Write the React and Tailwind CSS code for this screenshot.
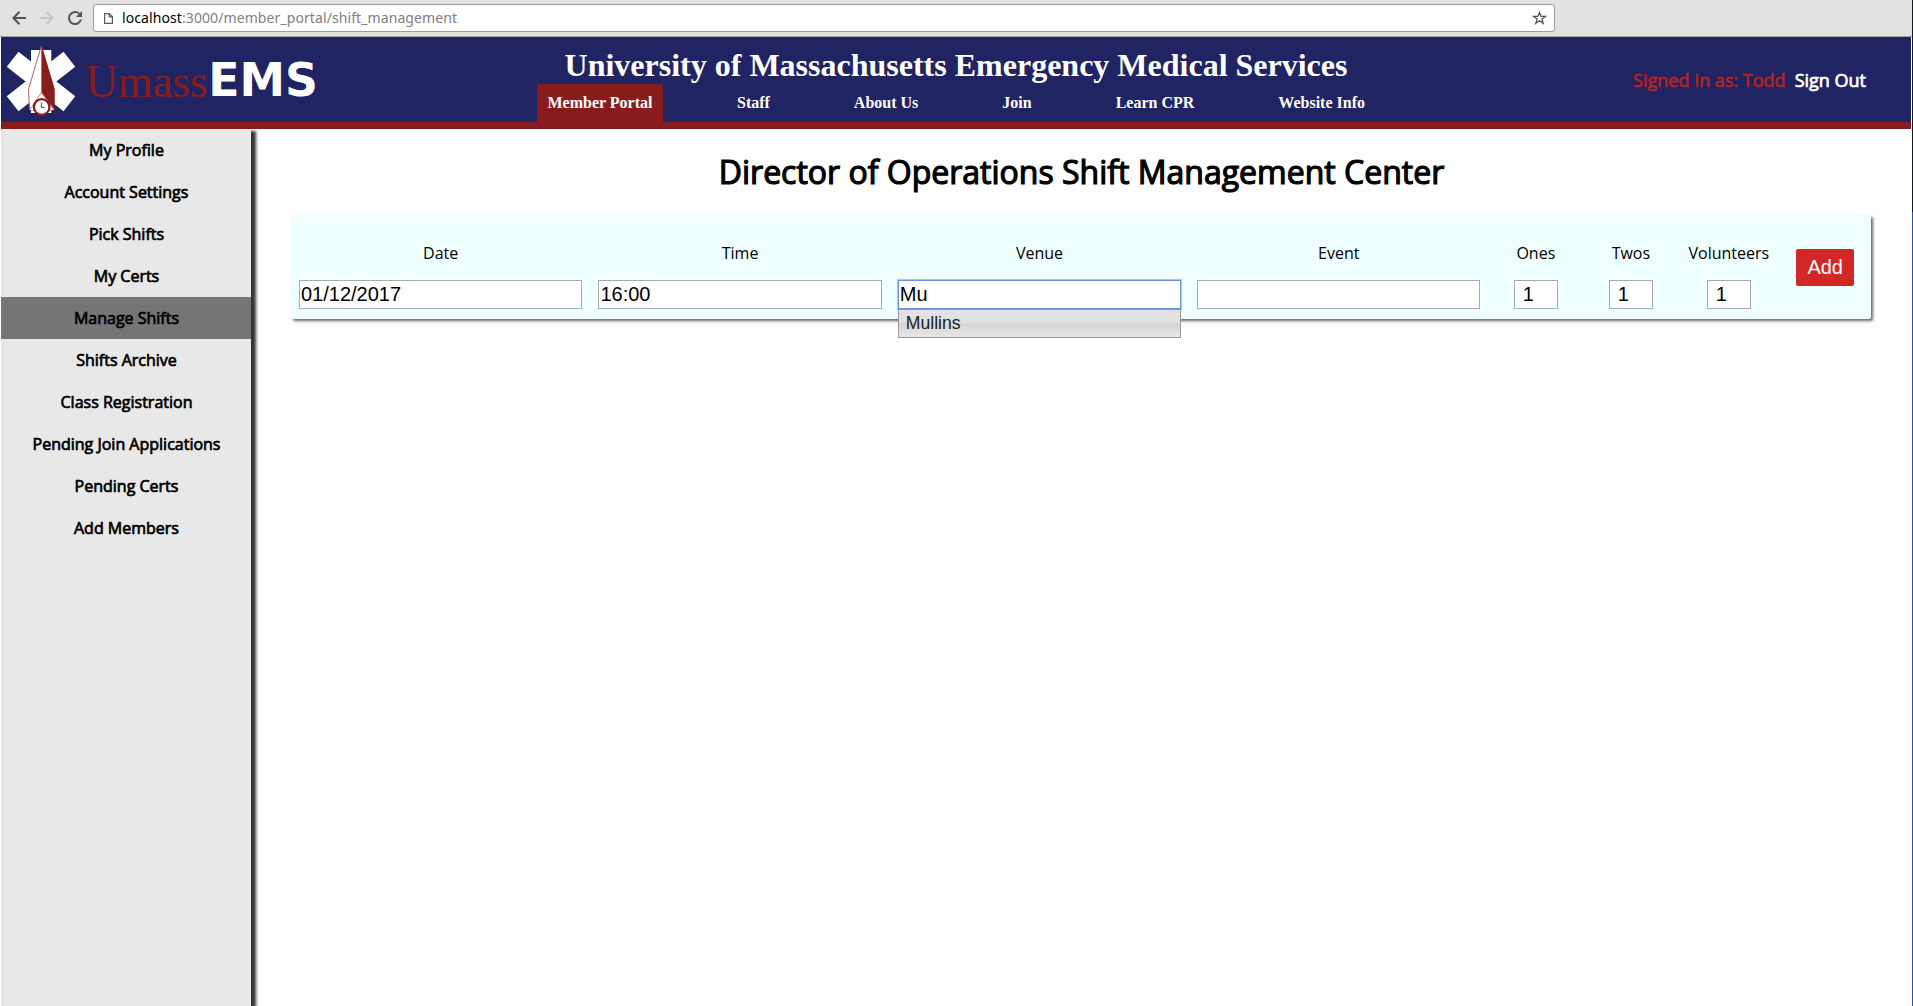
const navItems = ['Member Portal', 'Staff', 'About Us', 'Join', 'Learn CPR', 'Website Info'];

const sideItems = [
  'My Profile', 'Account Settings', 'Pick Shifts', 'My Certs', 'Manage Shifts',
  'Shifts Archive', 'Class Registration', 'Pending Join Applications', 'Pending Certs', 'Add Members',
];

function BrowserBar() {
  return (
    <div className="flex h-[37px] shrink-0 items-start border-b border-[#a3a3a3] bg-[#e2e2e2] pt-1 font-['Noto_Sans',sans-serif]">
      <svg className="ml-3 mt-[7px] shrink-0" width="14" height="14" viewBox="0 0 14 14" fill="none" stroke="#545454" strokeWidth="2">
        <path d="M14 7H1.5M7.5 0.8L1.4 7l6.1 6.2" />
      </svg>
      <svg className="ml-[14px] mt-[7px] shrink-0" width="14" height="14" viewBox="0 0 14 14" fill="none" stroke="#c6c6c6" strokeWidth="2">
        <path d="M0 7h12.5M6.5 0.8L12.6 7l-6.1 6.2" />
      </svg>
      <svg className="ml-[14px] mt-[7px] shrink-0" width="14" height="14" viewBox="0 0 14 14" fill="none" stroke="#545454" strokeWidth="2">
        <path d="M12.9 8.6A6 6 0 1 1 11.3 2.8" />
        <path d="M14 0v6H8z" fill="#545454" stroke="none" />
      </svg>
      <div className="ml-[11px] flex h-7 w-[1462px] items-center rounded-[3px] border border-[#9c9c9c] bg-white pl-[10px] pr-[7px]">
        <svg width="9" height="11" viewBox="0 0 9 11" fill="none" stroke="#5a5a5a" strokeWidth="1.2">
          <path d="M0.6 0.6h4.8l3 3v6.8H0.6zM5.2 0.6v3.2h3.2" />
        </svg>
        <span className="ml-[9px] text-[14px] leading-5 tracking-[0.09px] text-[#808080]">
          <span className="text-black">localhost</span>:3000/member_portal/shift_management
        </span>
        <svg className="ml-auto" width="15" height="14" viewBox="0 0 15 14" fill="none" stroke="#545454" strokeWidth="1.3">
          <path d="M7.5 1.4l1.6 4h4.2L9.900 8l1.3 4.400-3.700-2.600-3.700 2.600L5.100 8 1.700 5.400h4.200z" />
        </svg>
      </div>
    </div>
  );
}

function Logo() {
  return (
    <svg width="330" height="85" viewBox="0 0 330 85" className="block">
      <g fill="#fff" transform="translate(40 44.500)">
        <rect x="-10" y="-31.500" width="20.300" height="63" />
        <rect x="-9.500" y="-36" width="19" height="72" transform="rotate(52)" />
        <rect x="-9.500" y="-36" width="19" height="72" transform="rotate(-52)" />
      </g>
      <path d="M40.400 8.500L27.500 52.500L28.500 73H53V52z" fill="#fff" stroke="#9c3a3a" strokeWidth="0.8" />
      <path d="M40.400 8L53.600 52V73L40.400 55.500z" fill="#881c1c" />
      <path d="M28.500 73L40.400 55.500L53 73" fill="#fff" stroke="#b86a6a" strokeWidth="0.8" />
      <circle cx="40.700" cy="70" r="7.800" fill="#fff" stroke="#881c1c" strokeWidth="2.300" />
      <path d="M40.300 65.500v5h3.200" fill="none" stroke="#881c1c" strokeWidth="0.9" />
      <text x="84.500" y="59.700" fontFamily="'Liberation Serif', serif" fontSize="46" textLength="122" lengthAdjust="spacingAndGlyphs" fill="#881c1c">Umass</text>
      <text x="207.200" y="59.300" fontFamily="'DejaVu Sans', sans-serif" fontWeight="700" fontSize="47" textLength="109.800" lengthAdjust="spacingAndGlyphs" fill="#fff">EMS</text>
    </svg>
  );
}

function Header() {
  return (
    <header className="flex h-[92px] shrink-0 border-b-[7px] border-[#881c1c] bg-[#212463]">
      <div className="w-[536px]"><Logo /></div>
      <div className="flex w-[838px] flex-col items-center font-['Liberation_Serif',serif] font-bold text-white">
        <h1 className="h-[47px] pt-[10px] text-[32px] leading-[37px] whitespace-nowrap">
          University of Massachusetts Emergency Medical Services
        </h1>
        <nav className="flex w-full justify-between">
          {navItems.map((t, i) => (
            <a key={t} className={i === 0 ? 'h-[38px] w-[126px] rounded-t-[2px] bg-[#881c1c] text-center pt-[9px] text-base leading-[19px]' : 'h-[38px] px-[10px] pt-[9px] text-base leading-[19px]'}>{t}</a>
          ))}
        </nav>
      </div>
      <div className="ml-auto flex h-[85px] items-center gap-[9px] pr-[45px] pt-[2px] font-['Open_Sans',sans-serif] text-[18px] [-webkit-text-stroke:0.7px]">
        <span className="text-[#b22222]">Signed In as: Todd</span>
        <a className="text-white">Sign Out</a>
      </div>
    </header>
  );
}

function Sidebar() {
  return (
    <aside className="w-[250px] shrink-0 bg-[#e8e8e8] font-['Open_Sans',sans-serif] text-base text-black shadow-[5px_2px_3px_#333] [-webkit-text-stroke:0.7px]">
      {sideItems.map((t) => (
        <div key={t} className={t === 'Manage Shifts' ? 'flex h-[42px] items-center justify-center bg-[#757575] pl-px' : 'flex h-[42px] items-center justify-center pl-px'}>{t}</div>
      ))}
    </aside>
  );
}

function Field({ label, value, focused, children }) {
  return (
    <label className="relative flex flex-col px-2">
      <span className="mb-[16px] text-center leading-[22px]">{label}</span>
      <input
        readOnly
        defaultValue={value}
        className={
          focused
            ? "h-[29px] w-full border border-[#6a94d8] bg-white px-px pb-px font-['Liberation_Sans',sans-serif] text-[20px] shadow-[0_0_0_1px_#a9c6f2] outline-none"
            : "h-[29px] w-full border border-[#a9a9a9] bg-white px-px pb-px font-['Liberation_Sans',sans-serif] text-[20px] outline-none"
        }
      />
      {children}
    </label>
  );
}

function CountField({ label }) {
  return (
    <label className="flex flex-col items-center">
      <span className="mb-[16px] leading-[22px]">{label}</span>
      <input readOnly defaultValue="1" className="h-[29px] w-11 border border-[#a9a9a9] bg-white pb-px pl-2 font-['Liberation_Sans',sans-serif] text-[20px] outline-none" />
    </label>
  );
}

function ShiftForm() {
  return (
    <form className="mx-10 mt-[20px] grid h-[104px] grid-cols-[299.4px_299.4px_299.4px_299.2px_95px_95px_101px_1fr] rounded-[2px] bg-[#f0ffff] pt-[27px] font-['Open_Sans',sans-serif] text-base text-black shadow-[2px_2px_3px_#666]">
      <Field label="Date" value="01/12/2017" />
      <Field label="Time" value="16:00" />
      <Field label="Venue" value="Mu" focused>
        <div className="absolute left-2 right-2 top-[67px] h-[29px] border border-[#999] bg-[linear-gradient(#e3e3e3_0%,#e0e0e0_49%,#d6d6d6_50%,#e6e6e6_100%)] pl-[7px] font-['Liberation_Sans',sans-serif] text-[17.6px] leading-[26px] text-[#212121]">
          Mullins
        </div>
      </Field>
      <Field label="Event" value="" />
      <CountField label="Ones" />
      <CountField label="Twos" />
      <CountField label="Volunteers" />
      <div className="flex justify-center pt-[7px]">
        <button type="button" className="h-[37px] w-[58px] rounded-[2px] bg-[#d32626] pb-px font-['Liberation_Sans',sans-serif] text-[20px] text-white">Add</button>
      </div>
    </form>
  );
}

export default function App() {
  return (
    <div className="flex h-[1006px] w-[1913px] overflow-hidden bg-white">
      <div className="flex min-w-0 flex-1 flex-col">
        <BrowserBar />
        <div className="ml-px mr-px flex flex-1 flex-col overflow-hidden">
          <Header />
          <div className="flex flex-1 overflow-hidden">
            <Sidebar />
            <main className="flex-1">
              <h2 className="mt-[20px] pl-px text-center font-['Open_Sans',sans-serif] text-[32px] leading-[46px] text-black [-webkit-text-stroke:1.2px]">
                Director of Operations Shift Management Center
              </h2>
              <ShiftForm />
            </main>
          </div>
        </div>
      </div>
      <div className="flex w-px flex-col">
        <div className="h-[212px] bg-[#101820]" />
        <div className="flex-1 bg-[#2a52a0]" />
      </div>
    </div>
  );
}
